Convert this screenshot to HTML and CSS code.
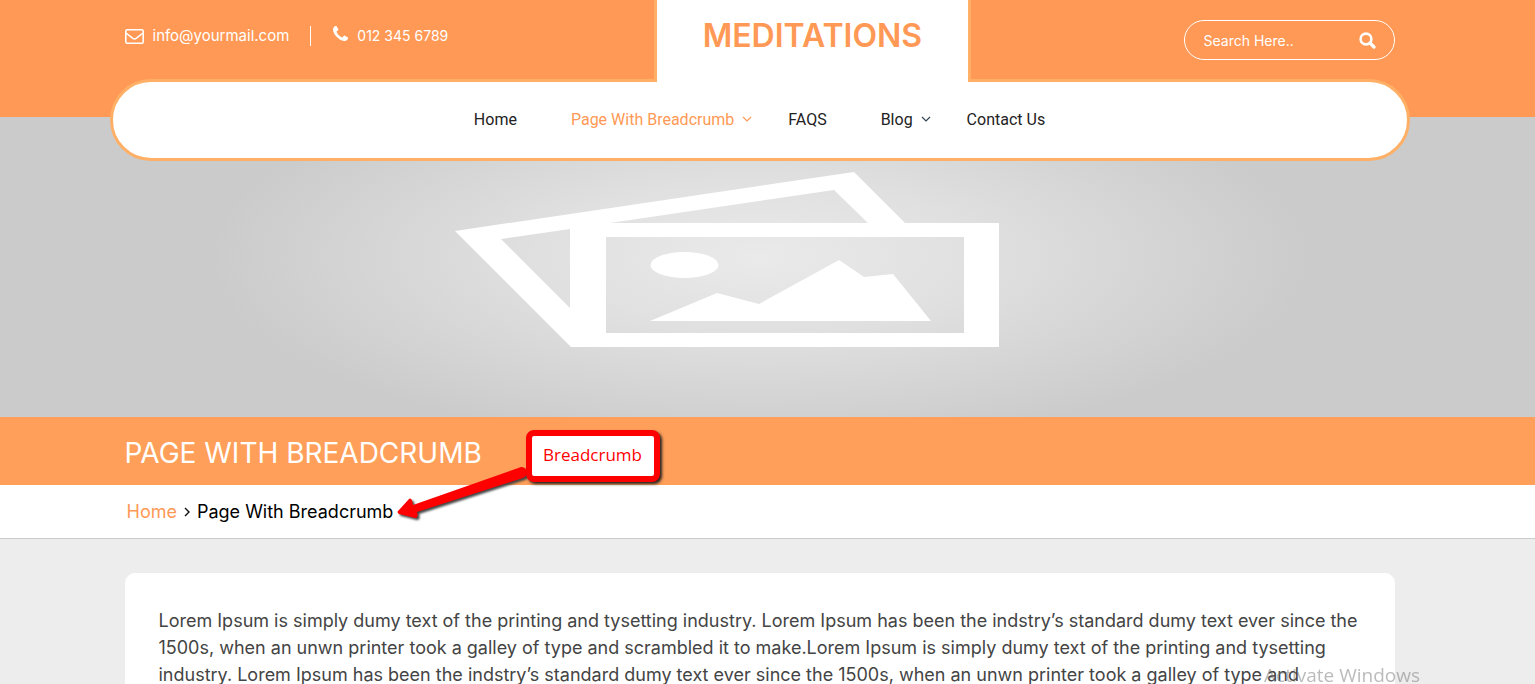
FILE: index.html
```html
<!DOCTYPE html>
<html lang="en">
<head>
    <meta charset="UTF-8">
    <meta name="viewport" content="width=device-width, initial-scale=1.0">
    <title>Meditations - Page With Breadcrumb</title>
    <link rel="stylesheet" href="styles.css">
</head>
<body>

<header class="site-header">
    <div class="container header-top">
        <div class="contact">
            <a class="contact-link contact-mail" href="mailto:info@yourmail.com">
                <svg viewBox="0 0 19 15" width="19" height="15" fill="none" stroke="#fff" stroke-width="1.6">
                    <rect x="0.8" y="0.8" width="17.4" height="13.4" rx="1.4"/>
                    <path d="M1 4 L7.5 9.2 Q9.5 10.6 11.5 9.2 L18 4"/>
                </svg>
                info@yourmail.com
            </a>
            <a class="contact-link contact-phone" href="tel:0123456789">
                <svg viewBox="0 0 1408 1408" width="15" height="15" fill="#fff">
                    <path d="M1408 1112q0 27-10 70.500t-21 68.500q-21 50-122 106-94 51-186 51-27 0-53-3.500t-57.500-12.500-47-14.500-55.500-20.500-49-18q-98-35-175-83-127-79-264-216t-216-264q-48-77-83-175-3-9-18-49t-20.500-55.500-14.500-47-12.500-57.500-3.500-53q0-92 51-186 56-101 106-122 25-11 68.500-21t70.500-10q14 0 21 3 18 6 53 76 11 19 30 54t35 63.500 31 53.500q3 4 17.500 25t21.500 35.500 7 28.500q0 20-28.500 50t-62 55-62 53-28.500 46q0 9 5 22.500t8.500 20.500 14 24 11.500 19q76 137 174 235t235 174q2 1 19 11.500t24 14 20.500 8.500 22.500 5q18 0 46-28.500t53-62 55-62 50-28.500q14 0 28.500 7t35.500 21.500 25 17.500q25 15 53.500 31t63.500 35 54 30q70 35 76 53 3 7 3 21z"/>
                </svg>
                012 345 6789
            </a>
        </div>
        <a class="logo" href="#">MEDITATIONS</a>
        <form class="search">
            <input class="search-input" type="text" placeholder="Search Here.." aria-label="Search">
            <button class="search-button" type="button" aria-label="Submit search">
                <svg viewBox="0 0 17 17" width="17" height="17" fill="none" stroke="#fff">
                    <circle cx="7" cy="7" r="5.400" stroke-width="2.600"/>
                    <path d="M11 11 L15 15" stroke-width="3.200" stroke-linecap="round"/>
                </svg>
            </button>
        </form>
    </div>
    <nav class="main-nav">
        <a href="#">Home</a>
        <a class="active has-menu" href="#">Page With Breadcrumb
            <svg class="chevron" viewBox="0 0 10 6" width="10" height="6"><path d="M1 1 L5 5 L9 1"/></svg>
        </a>
        <a href="#">FAQS</a>
        <a class="has-menu" href="#">Blog
            <svg class="chevron" viewBox="0 0 10 6" width="10" height="6"><path d="M1 1 L5 5 L9 1"/></svg>
        </a>
        <a href="#">Contact Us</a>
    </nav>
</header>

<div class="banner">
    <svg viewBox="0 0 1535 300" preserveAspectRatio="none" fill="#fff">
        <defs>
            <radialGradient id="glow" gradientUnits="userSpaceOnUse" cx="0" cy="0" r="1" gradientTransform="translate(760 140) scale(550 190)">
                <stop offset="0" stop-color="#eaeaea"/>
                <stop offset="0.4" stop-color="#e0e0e0"/>
                <stop offset="1" stop-color="#cbcbcb"/>
            </radialGradient>
        </defs>
        <rect width="1535" height="300" fill="url(#glow)"/>
        <path fill-rule="evenodd" d="M455 114 L854 55 L905 106 H999 V230 H571 Z M610 106 L834 73 L868 106 Z M501 122 L570 112 V191 Z M606 120 V216 H964 V120 Z"/>
        <ellipse cx="684.500" cy="148" rx="34" ry="13"/>
        <path d="M650 204 L717 176 L759 187 L839 143 L864 160 L893 157 L931 204 Z"/>
    </svg>
</div>

<section class="page-title">
    <div class="container">
        <h1>PAGE WITH BREADCRUMB</h1>
    </div>
    <div class="callout">Breadcrumb</div>
    <svg class="callout-arrow" viewBox="0 0 140 70" width="140" height="70">
        <path fill="#f00" d="M131 12 Q136 12 137 17 Q137 21 133 23 L27 57 Q29 63 25 63 L9 59 Q6 57 9 55 L19 44 Q22 42 23 50 Z"/>
    </svg>
</section>

<div class="breadcrumb">
    <div class="container breadcrumb-items">
        <a href="#">Home</a>
        <svg viewBox="0 0 6 10" width="6" height="10" fill="none" stroke="#111" stroke-width="1.400"><path d="M1 1 L5 5 L1 9"/></svg>
        <span>Page With Breadcrumb</span>
    </div>
</div>

<main class="content">
    <div class="container">
        <article class="card">
            <p>Lorem Ipsum is simply dumy text of the printing and tysetting industry. Lorem Ipsum has been the indstry’s standard dumy text ever since the 1500s, when an unwn printer took a galley of type and scrambled it to make.Lorem Ipsum is simply dumy text of the printing and tysetting industry. Lorem Ipsum has been the indstry’s standard dumy text ever since the 1500s, when an unwn printer took a galley of type and</p>
        </article>
    </div>
</main>

<div class="watermark">Activate Windows</div>

</body>
</html>
```
FILE: styles.css
```css
body {
    font-family: Inter, 'Open Sans', sans-serif;
    margin: 0;
    height: 100vh;
    overflow: hidden;
    background-color: #ededed;
    color: #444;
}

a {
    color: inherit;
    text-decoration: none;
}

.container {
    max-width: 1270px;
    margin: 0 auto;
}

.site-header,
.page-title,
.breadcrumb,
.content {
    padding-right: 16px;
}

/* header */
.site-header {
    display: flow-root;
    position: relative;
    background-color: #ff9955;
    color: #fff;
}

.header-top {
    display: grid;
    grid-template-columns: 5fr 3fr 4fr;
    height: 79px;
}

.contact {
    display: flex;
    align-items: flex-start;
    padding-top: 26px;
    line-height: 20px;
}

.contact-link {
    display: flex;
    align-items: center;
    gap: 9px;
}

.contact-mail {
    font-size: 15px;
}

.contact-phone {
    align-items: flex-start;
    margin-left: 21px;
    padding-left: 22px;
    border-left: 1px solid #fff;
    font-size: 14px;
}

.logo {
    position: relative;
    z-index: 1;
    margin-bottom: -3px;
    padding-top: 12px;
    border: solid #ffb066;
    border-width: 0 3px;
    background-color: #fff;
    color: #ff9955;
    font-size: 32px;
    font-weight: 600;
    line-height: 48px;
    text-align: center;
}

.search {
    display: flex;
    align-items: center;
    justify-self: end;
    width: 211px;
    height: 40px;
    margin-top: 20px;
    padding: 0 18px 0 19px;
    box-sizing: border-box;
    border: 1px solid #fff;
    border-radius: 20px;
}

.search-input {
    flex: 1;
    min-width: 0;
    padding: 0;
    border: none;
    background: none;
    color: #fff;
    font: 14px Inter, sans-serif;
}

.search-input::placeholder {
    color: #fff;
    opacity: 1;
}

.search-button {
    display: flex;
    padding: 0;
    border: none;
    background: none;
    cursor: pointer;
}

.main-nav {
    display: flex;
    align-items: center;
    justify-content: center;
    gap: 54px;
    max-width: 1300px;
    height: 82px;
    margin: 0 auto -44px;
    padding-bottom: 2px;
    box-sizing: border-box;
    border: 3px solid #ffb066;
    border-radius: 41px;
    background-color: #fff;
    color: #222;
    font-family: Roboto, sans-serif;
    font-size: 16px;
}

.main-nav .active {
    color: #ff9955;
}

.has-menu {
    display: flex;
    align-items: center;
    gap: 8px;
    margin-right: -18px;
}

.chevron {
    fill: none;
    stroke: #345;
    stroke-width: 1.2px;
}

.active .chevron {
    stroke: #ff9955;
}

/* banner */
.banner svg {
    display: block;
    width: 100%;
    height: 300px;
}

/* page title */
.page-title {
    position: relative;
    background-color: #ff9f5a;
}

.page-title h1 {
    margin: 0;
    padding: 16px 0 12px;
    color: #fff;
    font-size: 28px;
    font-weight: 400;
    line-height: 40px;
}

/* note pointing at the breadcrumb trail */
.callout {
    position: absolute;
    top: 13px;
    left: 526px;
    z-index: 2;
    width: 134px;
    height: 52px;
    padding-left: 11px;
    box-sizing: border-box;
    border: 6px solid #f00;
    border-radius: 8px;
    background-color: #fff;
    box-shadow: 2px 2px 3px #222;
    color: #f00;
    font-family: 'Open Sans', sans-serif;
    font-size: 17px;
    line-height: 38px;
}

.callout-arrow {
    position: absolute;
    top: 38px;
    left: 390px;
    z-index: 1;
    overflow: visible;
    filter: drop-shadow(2px 2px 1px #444);
}

/* breadcrumb */
.breadcrumb {
    border-bottom: 1px solid #ccc;
    background-color: #fff;
    color: #000;
}

.breadcrumb-items {
    display: flex;
    align-items: center;
    gap: 7px;
    height: 53px;
    padding-left: 2px;
    box-sizing: border-box;
    font-size: 18px;
}

.breadcrumb-items a {
    color: #ff9955;
}

/* content */
.content {
    padding-top: 34px;
}

.card {
    padding: 34px;
    border-radius: 10px;
    background-color: #fff;
}

.card p {
    margin: 0;
    font-size: 18px;
    line-height: 27px;
}

.watermark {
    position: fixed;
    right: 115px;
    bottom: 0;
    color: rgba(120, 120, 120, 0.5);
    font-family: 'Open Sans', sans-serif;
    font-size: 19px;
    line-height: 18px;
}
```
